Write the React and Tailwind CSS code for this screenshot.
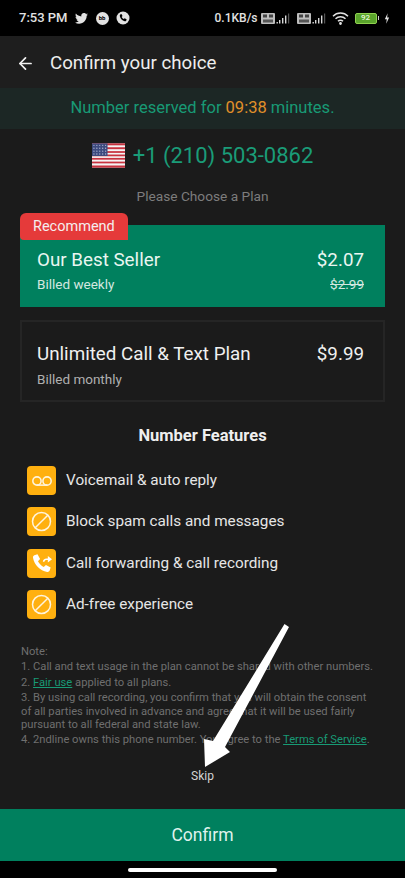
import { ArrowLeft } from "lucide-react"

const Signal = () => (
  <svg width="31" height="13" viewBox="0 0 31 13" className="mr-[5px]">
    <rect x="0" y="1" width="14" height="11" rx="1" fill="#bdbdbd" />
    <rect x="2" y="2.500" width="4" height="3" fill="#444" />
    <rect x="8" y="2.500" width="4" height="3" fill="#444" />
    <rect x="2" y="7.500" width="10" height="3" fill="#555" />
    <rect x="15.500" y="10" width="1.400" height="1.500" fill="#d8d8d8" />
    <rect x="18" y="8" width="1.400" height="3.500" fill="#d8d8d8" />
    <rect x="21" y="6" width="1.400" height="5.500" fill="#d8d8d8" />
    <rect x="24" y="3.500" width="1.400" height="8" fill="#d8d8d8" />
    <rect x="27" y="1.500" width="1.200" height="10" fill="#555" />
  </svg>
)

const StatusBar = () => (
  <div className="flex h-9 items-center justify-between bg-black pl-[19px] pr-[15px] text-[#e2e2e2]">
    <div className="flex items-center">
      <span className="text-[13px] font-medium">7:53 PM</span>
      <svg width="13" height="11" viewBox="0 0 24 20" className="ml-[7px]" fill="#e2e2e2">
        <path d="M24 2.400c-.9.4-1.800.7-2.800.8 1-.6 1.800-1.600 2.200-2.700-1 .6-2 1-3.100 1.200A4.900 4.900 0 0 0 11.800 6.200C7.700 6 4.100 4 1.700.9c-1.300 2.200-.7 5.100 1.500 6.600-.8 0-1.600-.2-2.200-.6 0 2.400 1.700 4.400 3.900 4.900-.7.2-1.500.2-2.200.1.600 2 2.400 3.400 4.600 3.400A9.900 9.900 0 0 1 0 17.300 14 14 0 0 0 7.500 19.500c9.100 0 14.300-7.700 14-14.600 1-.7 1.800-1.600 2.500-2.500z" />
      </svg>
      <span className="ml-[8px] flex h-[13px] w-[13px] items-center justify-center rounded-full bg-[#e2e2e2] text-[6px] font-bold leading-none text-black">bb</span>
      <svg width="14" height="14" viewBox="0 0 14 14" className="ml-[7px]">
        <circle cx="7" cy="7" r="6.500" fill="#e2e2e2" />
        <path d="M4.200 3.500l1.300-.4 1 2-.8.8c.4.900 1.100 1.700 2.100 2.200l.8-.8 2 1-.4 1.400c-.3.500-.9.700-1.500.6C6.200 9.500 4.500 7.800 3.800 5c-.1-.6.100-1.200.4-1.500z" fill="#000" />
      </svg>
    </div>
    <div className="flex items-center">
      <span className="mr-[3px] text-[12px] font-medium">0.1KB/s</span>
      <Signal />
      <Signal />
      <svg width="17" height="13" viewBox="0 0 17 13" fill="none" stroke="#e2e2e2" strokeWidth="1.400" className="ml-[-1px]">
        <path d="M1 4.200a10.500 10.500 0 0 1 15 0" />
        <path d="M3.500 6.800a7 7 0 0 1 10 0" />
        <path d="M6 9.300a3.400 3.400 0 0 1 5 0" />
        <circle cx="8.500" cy="11.500" r=".7" fill="#e2e2e2" />
      </svg>
      <div className="ml-[6px] flex h-[11px] w-[22px] items-center justify-center rounded-[2px] border border-[#8fd14f] bg-[#5aa42c] text-[8px] font-medium leading-none text-[#e8f7d8]">92</div>
      <div className="ml-[1px] h-[4px] w-[1.500px] bg-[#cfcfcf]" />
      <svg width="6" height="11" viewBox="0 0 7 12" fill="#e2e2e2" className="ml-[5px]">
        <path d="M4.200 0L1 6.800h2.200L2.600 12 6 4.800H3.700z" />
      </svg>
    </div>
  </div>
)

const Flag = () => (
  <svg width="33" height="25" viewBox="0 0 34 25">
    <rect width="34" height="25" fill="#f4f4f4" />
    <rect y="0" width="34" height="2" fill="#c8323f" />
    <rect y="4" width="34" height="2" fill="#c8323f" />
    <rect y="8" width="34" height="1.800" fill="#c8323f" />
    <rect y="11.500" width="34" height="1.800" fill="#c8323f" />
    <rect y="15" width="34" height="1.800" fill="#c8323f" />
    <rect y="18.800" width="34" height="1.800" fill="#c8323f" />
    <rect y="22.800" width="34" height="2.200" fill="#c8323f" />
    <rect width="16" height="13" fill="#3d4a7e" />
    {[2, 5, 8, 11, 14].map((x) =>
      [2, 5, 8, 11].map((y) => <circle key={`${x}-${y}`} cx={x} cy={y} r=".7" fill="#aab2cf" />)
    )}
  </svg>
)

const VoicemailIcon = () => (
  <svg width="22" height="22" viewBox="0 0 24 24" fill="none" stroke="#fff4dc" strokeWidth="1.700">
    <circle cx="6.500" cy="12" r="4.500" />
    <circle cx="17.500" cy="12" r="4.500" />
    <path d="M6.500 16.500h11" />
  </svg>
)

const BlockIcon = () => (
  <svg width="21" height="21" viewBox="0 0 21 21" fill="none" stroke="#fff4dc" strokeWidth="1.500">
    <circle cx="10.500" cy="10.500" r="9" />
    <path d="M4.200 16.800L16.800 4.200" />
  </svg>
)

const ForwardIcon = () => (
  <svg width="20" height="20" viewBox="0 0 24 24" fill="#fff">
    <path d="M6.600 1.500L2.800 2.600C1.600 3.100 1 4.300 1.200 5.600 2.600 13.900 9.700 21 18.200 22.700c1.300.2 2.600-.4 3-1.600l1.200-3.700-5.700-3-2.600 2.400c-3-1.500-5.400-3.900-6.900-6.900l2.500-2.700z" />
    <path d="M13 10.500c0-2.500 1.800-4 4.500-4h1.500V3.500l5 4-5 4V8.500h-1.500c-1.300 0-2.500.6-2.500 2z" />
  </svg>
)

const features = [
  { icon: <VoicemailIcon />, text: "Voicemail & auto reply" },
  { icon: <BlockIcon />, text: "Block spam calls and messages" },
  { icon: <ForwardIcon />, text: "Call forwarding & call recording" },
  { icon: <BlockIcon />, text: "Ad-free experience" },
]

export default function App() {
  return (
    <div className="relative flex h-[878px] w-[405px] flex-col overflow-hidden bg-[#1b1b1b] font-['Roboto',sans-serif] text-white">
      <StatusBar />

      <div className="flex h-[52px] items-center bg-[#1e1e1e] pl-[16px] pt-[2px]">
        <ArrowLeft size={19} strokeWidth={2.200} className="text-[#f2f2f2]" />
        <span className="ml-[15px] text-[18.700px] text-[#ededed]">Confirm your choice</span>
      </div>

      <div className="flex h-[41px] items-center justify-center bg-[#1c2725] text-[16.500px] text-[#189a75]">
        <span>Number reserved for <span className="text-[#e0902a]">09:38</span> minutes.</span>
      </div>

      <div className="mt-[13px] flex items-center justify-center gap-[8px]">
        <Flag />
        <span className="text-[22px] leading-[27px] text-[#1a9c78]">+1 (210) 503-0862</span>
      </div>

      <p className="mt-[19px] text-center text-[13.700px] leading-[16px] text-[#7d7d7d]">Please Choose a Plan</p>

      <div className="relative mx-[20px] mt-[21px] h-[82px] bg-[#00805e] pl-[17px] pr-[21px] pt-[22px]">
        <div className="absolute -top-[12px] left-0 flex h-[27px] w-[108px] items-center rounded-bl-[4px] rounded-tl-[6px] rounded-tr-[6px] bg-[#e53a3a] pl-[13px] text-[14.500px] text-[#f4eeee]">Recommend</div>
        <div className="flex items-center justify-between pt-[1px] text-[18.800px] leading-[24px] text-[#e9f6f1]">
          <span>Our Best Seller</span>
          <span>$2.07</span>
        </div>
        <div className="mt-[4px] flex items-center justify-between text-[13.500px] leading-[16px] text-[#d4e8e0]">
          <span>Billed weekly</span>
          <span className="line-through">$2.99</span>
        </div>
      </div>

      <div className="mx-[20px] mt-[13px] h-[82px] border-2 border-[#252525] pl-[15px] pr-[19px] pt-[20px]">
        <div className="flex items-center justify-between text-[18.800px] leading-[24px] text-[#f0f0f0]">
          <span>Unlimited Call & Text Plan</span>
          <span>$9.99</span>
        </div>
        <div className="mt-[5px] text-[13.500px] leading-[16px] text-[#b0b0b0]">Billed monthly</div>
      </div>

      <h2 className="mt-[24px] text-center text-[16.500px] font-bold leading-[19px] text-[#efefef]">Number Features</h2>

      <div className="ml-[27px] mt-[21px] flex flex-col gap-[12.300px]">
        {features.map((feature) => (
          <div key={feature.text} className="flex h-[29px] items-center">
            <div className="flex h-[29px] w-[29px] items-center justify-center rounded-[4px] bg-[#ffb00f]">{feature.icon}</div>
            <span className="ml-[10px] text-[15.300px] text-[#e6e6e6]">{feature.text}</span>
          </div>
        ))}
      </div>

      <div className="ml-[21px] mt-[26px] w-[355px] text-[11.200px] leading-[13.200px] text-[#6f6f6f]">
        <p>Note:</p>
        <p className="mt-[2.300px]">1. Call and text usage in the plan cannot be shared with other numbers.</p>
        <p className="mt-[2.300px]">2. <span className="text-[#189a75] underline">Fair use</span> applied to all plans.</p>
        <p className="mt-[2.300px]">3. By using call recording, you confirm that you will obtain the consent of all parties involved in advance and agree that it will be used fairly pursuant to all federal and state law.</p>
        <p className="mt-[2.300px]">4. 2ndline owns this phone number. You agree to the <span className="text-[#189a75] underline">Terms of Service</span>.</p>
      </div>

      <div className="mt-[22px] text-center text-[12px] leading-[14px] text-[#d4d4d4]">Skip</div>

      <div className="mt-auto flex h-[52px] items-center justify-center bg-[#00805e] pt-[1px] text-[17.500px] text-[#dff2ec]">Confirm</div>
      <div className="flex h-[17px] items-center justify-center bg-black">
        <div className="h-[4px] w-[149px] rounded-full bg-white" />
      </div>

      {/* annotation arrow drawn over the notes */}
      <svg width="405" height="878" viewBox="0 0 405 878" className="pointer-events-none absolute left-0 top-0">
        <path d="M284.500 624L289 627 L225 747 L230 752 L205 767 L204 739 L213 741z" fill="#fff" />
      </svg>
    </div>
  )
}
